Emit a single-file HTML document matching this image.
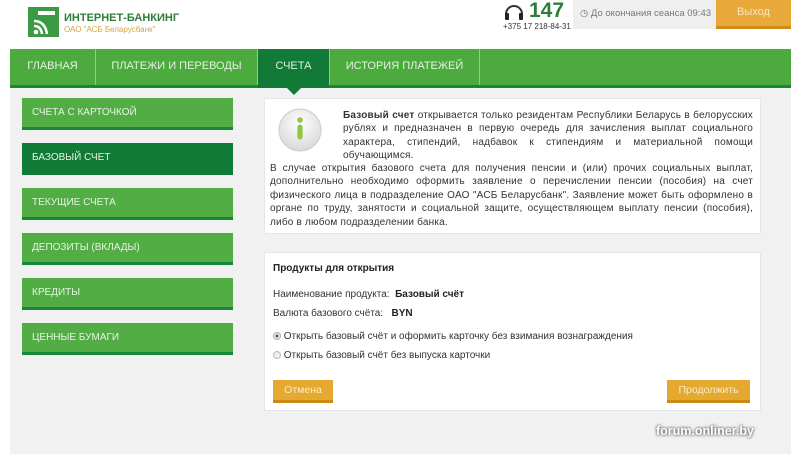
<!DOCTYPE html>
<html><head><meta charset="utf-8"><style>
*{margin:0;padding:0;box-sizing:border-box}
body{width:800px;height:454px;overflow:hidden;background:#fff;font-family:"Liberation Sans","DejaVu Sans",sans-serif;position:relative}
.abs{position:absolute}
.nav{left:10px;top:49px;width:781px;height:39px;background:#4caa3f;border-bottom:3px solid #17873a}
.nav div{position:absolute;top:0;height:36px;line-height:34px;color:#e3f2df;font-size:11px;text-align:center;border-right:1px solid #8fcf85;white-space:nowrap}
.gray{left:10px;top:88px;width:781px;height:366px;background:#f1f1f1}
.side{left:22px;width:211px;height:32px;background:#51ad44;border-bottom:3px solid #17873a;color:#e6f4e2;font-size:10px;line-height:29px;padding-left:10px}
.box{background:#fff;border:1px solid #e6e6e6}
.p{font-size:10px;letter-spacing:0.2px;color:#333;line-height:13.4px;text-align:justify}
.btn{background:#e6a92f;border-bottom:3px solid #c98a12;color:#fbecc8;font-size:10.5px;text-align:center;line-height:20px;height:23px}
</style></head><body>
<div class="abs" style="left:28px;top:7px;width:31px;height:30px">
<svg width="31" height="30"><rect x="0" y="0" width="31" height="30" fill="#3b9b43"/><rect x="10" y="4" width="17" height="4" fill="#fff"/><path d="M6 14 q11 0 13 13" stroke="#fff" stroke-width="2.5" fill="none"/><path d="M6 19 q7 0 8 8" stroke="#fff" stroke-width="2.5" fill="none"/><circle cx="8" cy="25" r="2.3" fill="#fff"/></svg></div>
<div class="abs" style="left:64px;top:12px;font-size:11px;font-weight:bold;color:#2d7c3a">ИНТЕРНЕТ-БАНКИНГ</div>
<div class="abs" style="left:64px;top:25px;font-size:8px;color:#d6a640">ОАО "АСБ Беларусбанк"</div>
<svg class="abs" style="left:503px;top:2px" width="22" height="20"><path d="M3 12 a8 8 0 0 1 16 0" stroke="#333" stroke-width="2" fill="none"/><rect x="2" y="11" width="4" height="7" rx="1" fill="#222"/><rect x="16" y="11" width="4" height="7" rx="1" fill="#222"/></svg>
<div class="abs" style="left:529px;top:-1px;font-size:21px;font-weight:bold;color:#2d7c3a">147</div>
<div class="abs" style="left:503px;top:22px;font-size:8px;color:#333">+375 17 218-84-31</div>
<div class="abs" style="left:573px;top:0;width:143px;height:29px;background:#efefef;font-size:9.5px;color:#777;line-height:27px;padding-left:7px;white-space:nowrap">&#9719; До окончания сеанса 09:43</div>
<div class="abs" style="left:716px;top:0;width:75px;height:29px;background:#e8a83a;border-bottom:3px solid #d08a16;color:#fbe7bd;font-size:11px;text-align:center;line-height:24px">Выход</div>
<div class="abs nav">
<div style="left:0;width:86px">ГЛАВНАЯ</div>
<div style="left:86px;width:162px">ПЛАТЕЖИ И ПЕРЕВОДЫ</div>
<div style="left:248px;width:71px;background:#117a36;border-right:none;height:39px">СЧЕТА</div>
<div style="left:319px;width:151px;border-left:1px solid #8fcf85">ИСТОРИЯ ПЛАТЕЖЕЙ</div>
</div>
<div class="abs gray"></div>
<div class="abs" style="left:287px;top:88px;width:0;height:0;border-left:7px solid transparent;border-right:7px solid transparent;border-top:7px solid #117a36"></div>
<div class="abs side" style="top:98px">СЧЕТА С КАРТОЧКОЙ</div>
<div class="abs side" style="top:143px;background:#117a36;border-bottom-color:#117a36">БАЗОВЫЙ СЧЕТ</div>
<div class="abs side" style="top:188px">ТЕКУЩИЕ СЧЕТА</div>
<div class="abs side" style="top:233px">ДЕПОЗИТЫ (ВКЛАДЫ)</div>
<div class="abs side" style="top:278px">КРЕДИТЫ</div>
<div class="abs side" style="top:323px">ЦЕННЫЕ БУМАГИ</div>
<div class="abs box" style="left:264px;top:98px;width:497px;height:136px"></div>
<svg class="abs" style="left:278px;top:108px" width="44" height="44"><defs><radialGradient id="g" cx="50%" cy="35%" r="65%"><stop offset="0" stop-color="#fff"/><stop offset="1" stop-color="#d8d8d8"/></radialGradient></defs><circle cx="22" cy="22" r="21" fill="url(#g)" stroke="#ccc"/><circle cx="22" cy="12" r="2.8" fill="#8fc73e"/><rect x="19.4" y="16.5" width="5.2" height="15" rx="2.6" fill="#8fc73e"/></svg>
<div class="abs p" style="left:343px;top:109px;width:410px">
<b>Базовый счет</b> открывается только резидентам Республики Беларусь в белорусских рублях и предназначен в первую очередь для зачисления выплат социального характера, стипендий, надбавок к стипендиям и материальной помощи обучающимся.</div>
<div class="abs p" style="left:270px;top:162px;width:483px">В случае открытия базового счета для получения пенсии и (или) прочих социальных выплат, дополнительно необходимо оформить заявление о перечислении пенсии (пособия) на счет физического лица в подразделение ОАО "АСБ Беларусбанк". Заявление может быть оформлено в органе по труду, занятости и социальной защите, осуществляющем выплату пенсии (пособия), либо в любом подразделении банка.</div>
<div class="abs box" style="left:264px;top:252px;width:497px;height:159px"></div>
<div class="abs" style="left:273px;top:263px;font-size:10px;font-weight:bold;color:#222">Продукты для открытия</div>
<div class="abs" style="left:273px;top:289px;font-size:10px;color:#333">Наименование продукта: &nbsp;<b style="color:#222">Базовый счёт</b></div>
<div class="abs" style="left:273px;top:308px;font-size:10px;color:#333">Валюта базового счёта: &nbsp;&nbsp;<b style="color:#222">BYN</b></div>
<div class="abs" style="left:273px;top:331px;font-size:10px;color:#333"><span style="display:inline-block;width:8px;height:8px;border-radius:50%;border:1px solid #aaa;background:radial-gradient(#555 30%,#eee 40%);vertical-align:-1px"></span> Открыть базовый счёт и оформить карточку без взимания вознаграждения</div>
<div class="abs" style="left:273px;top:350px;font-size:10px;color:#333"><span style="display:inline-block;width:8px;height:8px;border-radius:50%;border:1px solid #bbb;background:#eee;vertical-align:-1px"></span> Открыть базовый счёт без выпуска карточки</div>
<div class="abs btn" style="left:273px;top:380px;width:60px">Отмена</div>
<div class="abs btn" style="left:667px;top:380px;width:83px">Продолжить</div>
<div class="abs" style="left:656px;top:424px;font-size:12.5px;font-weight:bold;color:#fff;text-shadow:0 0 2px #666,0 0 3px #666">forum.onliner.by</div>
</body></html>
